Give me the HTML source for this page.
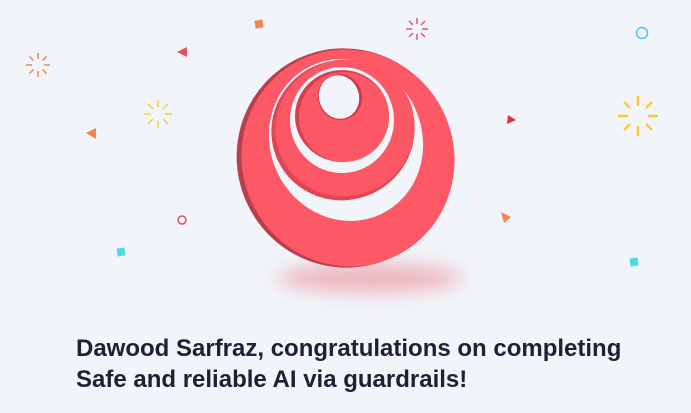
<!DOCTYPE html>
<html><head><meta charset="utf-8"><style>
html,body{margin:0;padding:0;width:691px;height:413px;background:#f1f4f9;overflow:hidden}
svg{position:absolute;left:0;top:0}
.t{position:absolute;left:76px;top:333px;font:bold 24px/31px "Liberation Sans",sans-serif;color:#1b2233;white-space:nowrap}
</style></head><body>
<svg width="691" height="413" viewBox="0 0 691 413">
<defs>
<filter id="b" x="-50%" y="-200%" width="200%" height="500%"><feGaussianBlur stdDeviation="9"/></filter>
</defs>
<ellipse cx="370" cy="278" rx="92" ry="14" fill="#eeb4bc" filter="url(#b)"/>
<g>
<ellipse cx="345" cy="158" rx="108" ry="110" transform="rotate(-25 345 158)" fill="#b8404c"/>
<ellipse cx="348" cy="158" rx="106" ry="109" transform="rotate(-25 348 158)" fill="#fd5866"/>
<ellipse cx="346" cy="140" rx="76" ry="82" transform="rotate(-25 346 140)" fill="#f1f4f9"/>
<ellipse cx="343" cy="130" rx="72" ry="70" transform="rotate(-25 343 130)" fill="#e04654"/>
<ellipse cx="345" cy="128" rx="70" ry="68" transform="rotate(-25 345 128)" fill="#fb5765"/>
<ellipse cx="342" cy="120" rx="52" ry="53" fill="#f1f4f9"/>
<ellipse cx="342" cy="116" rx="47" ry="46" fill="#d9404f"/>
<ellipse cx="344" cy="117" rx="45" ry="45" fill="#fb5765"/>
<ellipse cx="340" cy="97" rx="22" ry="23" transform="rotate(-20 340 97)" fill="#c83c4a"/>
<ellipse cx="339" cy="97" rx="20" ry="22" transform="rotate(-20 339 97)" fill="#f1f4f9"/>
</g>
<g stroke-width="1.5" stroke-linecap="butt">
<g stroke="#f4845a" transform="translate(38,65)"><path d="M0-12V-6M0 6V12M-12 0H-6M6 0H12M-8.5-8.5L-4.5-4.5M4.5 4.5L8.5 8.5M-8.5 8.5L-4.5 4.5M4.5-4.5L8.5-8.5"/></g>
<g stroke="#f9d13d" transform="translate(158,114)"><path d="M0-14V-7M0 7V14M-14 0H-7M7 0H14M-10-10L-5-5M5 5L10 10M-10 10L-5 5M5-5L10-10"/></g>
<g stroke="#e95563" transform="translate(417,29)"><path d="M0-11V-5M0 5V11M-11 0H-5M5 0H11M-8-8L-4-4M4 4L8 8M-8 8L-4 4M4-4L8-8"/></g>
<g stroke="#f9cd3a" stroke-width="2.5" transform="translate(638,116)"><path d="M0-20V-10M0 10V20M-20 0H-10M10 0H20M-14-14L-8-8M8 8L14 14M-14 14L-8 8M8-8L14-14"/></g>
</g>
<polygon points="177,52 187,47 187,57" fill="#ea5060"/>
<polygon points="86,133 96,128 96,139" fill="#f4844f"/>
<polygon points="508,115 516,120 507,124" fill="#e0303c"/>
<polygon points="501,212 511,217 504,223" fill="#f4844f"/>
<circle cx="182" cy="220" r="4" fill="none" stroke="#ea5060" stroke-width="1.5"/>
<circle cx="642" cy="33" r="5.5" fill="none" stroke="#4fc8e8" stroke-width="1.5"/>
<rect x="117" y="248" width="8" height="8" fill="#4fd8e8" transform="rotate(-8 121 252)"/>
<rect x="630" y="258" width="8" height="8" fill="#4fd8e8" transform="rotate(-8 634 262)"/>
<rect x="255" y="20" width="8" height="8" fill="#f4844f" transform="rotate(-10 259 24)"/>
</svg>
<div class="t">Dawood Sarfraz, congratulations on completing<br>Safe and reliable AI via guardrails!</div>
</body></html>
